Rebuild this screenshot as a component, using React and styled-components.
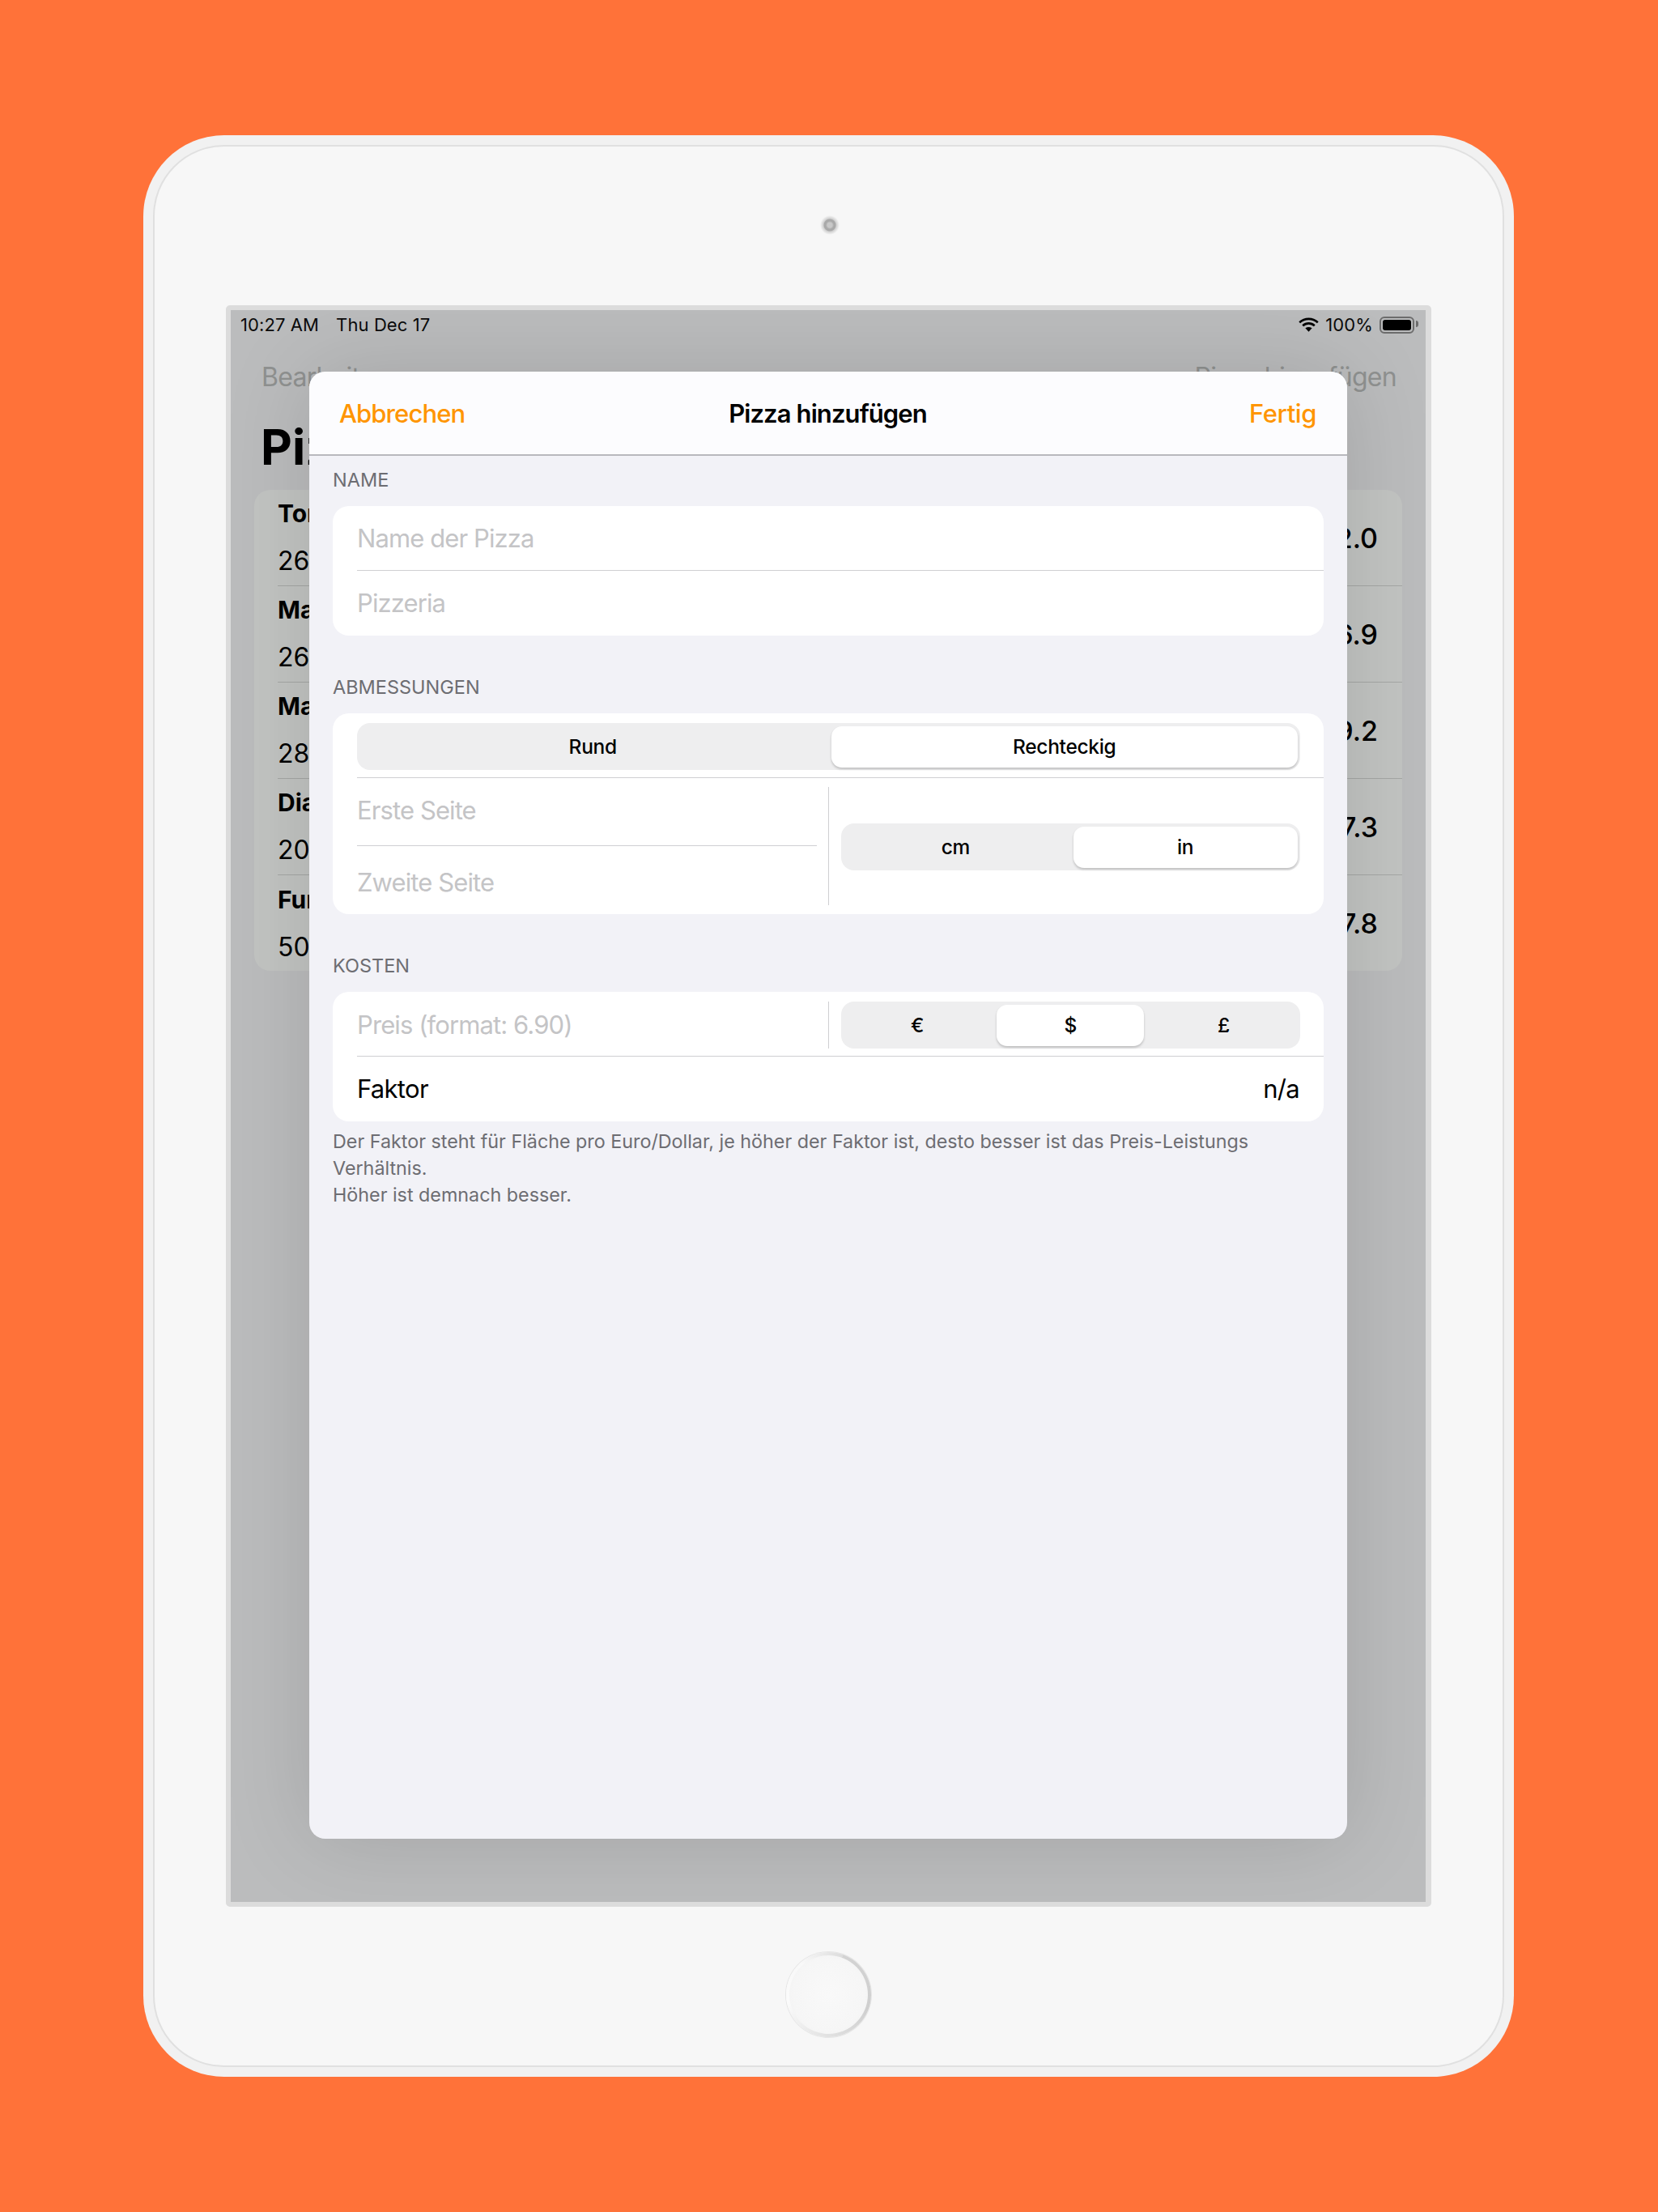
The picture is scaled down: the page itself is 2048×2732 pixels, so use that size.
import React from "react";
import styled, { createGlobalStyle } from "styled-components";

const Global = createGlobalStyle`
  html, body { margin: 0; padding: 0; background: #ff7239; }
  body { font-family: Inter, "Liberation Sans", sans-serif; -webkit-font-smoothing: antialiased; }
  * { box-sizing: border-box; }
`;

const Page = styled.div`
  width: 2048px;
  height: 2732px;
  padding: 167px 178px 167px 177px;
  background: #ff7239;
`;
const Device = styled.div`
  height: 2398px;
  padding: 12px;
  border-radius: 100px;
  background: #f1f1f1;
`;
const DeviceFace = styled.div`
  height: 100%;
  border: 2px solid #e0e0e0;
  border-radius: 88px;
  background: #f7f7f7;
  display: flex;
  flex-direction: column;
  align-items: center;
  padding-top: 85px;
`;
const Camera = styled.div`
  width: 24px;
  height: 24px;
  flex: none;
  margin-left: 3px;
  border-radius: 50%;
  background: radial-gradient(circle, #c8c8c8 0 3px, #a9a9a9 5px 7px, #cfcfcf 8px, #eeeeee 11px, #f7f7f7 12px);
`;
const ScreenFrame = styled.div`
  width: 1489px;
  height: 1978px;
  flex: none;
  margin-top: 87px;
  border: solid #dcdcdc;
  border-width: 6px 7px 6px 6px;
  border-radius: 5px;
  background: #dcdcdc;
`;
const Screen = styled.div`
  position: relative;
  height: 100%;
  overflow: hidden;
  background: #bbbcbd;
`;
const HomeButton = styled.div`
  width: 105px;
  height: 105px;
  flex: none;
  margin-top: 56px;
  padding: 4px;
  border-radius: 50%;
  background: conic-gradient(from 20deg, #d3d3d3 0deg, #cfcfcf 90deg, #e4e4e4 170deg, #fbfbfb 240deg, #f8f8f8 300deg, #dcdcdc 360deg);
  box-shadow: 0 0 0 1px #e6e6e6;
`;
const HomeInner = styled.div`
  width: 100%;
  height: 100%;
  border-radius: 50%;
  background: radial-gradient(circle, #f9f9f9 0, #f6f6f6 65%, #eeeeee 100%);
`;

const StatusBar = styled.div`
  height: 36px;
  padding: 0 9px 0 12px;
  display: flex;
  align-items: center;
  justify-content: space-between;
  font-size: 22px;
  letter-spacing: 0.1px;
  color: #0b0b0b;
`;
const StatusGroup = styled.div`
  display: flex;
  align-items: center;
  gap: ${p => p.$gap}px;
`;
const Battery = styled.div`
  width: 43px;
  height: 21px;
  padding: 2px;
  border: 2px solid #6c6c6c;
  border-radius: 6px;
  position: relative;
  margin-right: 5px;
  &::before {
    content: "";
    display: block;
    height: 100%;
    border-radius: 3px;
    background: #000;
  }
  &::after {
    content: "";
    position: absolute;
    right: -7px;
    top: 3px;
    width: 3px;
    height: 8px;
    border-radius: 0 3px 3px 0;
    background: #6c6c6c;
  }
`;
const NavBar = styled.div`
  height: 58px;
  margin-top: 17px;
  padding: 0 36px 0 38px;
  display: flex;
  align-items: center;
  justify-content: space-between;
  font-size: 32px;
  letter-spacing: -0.7px;
  color: #8f9190;
`;
const LargeTitle = styled.div`
  height: 111px;
  padding: 16px 0 0 37px;
  font-size: 60px;
  line-height: 84px;
  font-weight: 700;
  color: #000;
`;
const BackList = styled.div`
  margin: 0 29px;
  height: 594px;
  border-radius: 20px;
  background: #c2c4c2;
  overflow: hidden;
`;
const BackRow = styled.div`
  height: 119px;
  margin-left: 29px;
  padding-right: 30px;
  display: flex;
  align-items: center;
  justify-content: space-between;
  border-bottom: ${p => (p.$last ? "none" : "1.5px solid #a5a7a5")};
  color: #000;
`;
const BackName = styled.div`
  font-size: 30px;
  line-height: 34px;
  font-weight: 700;
`;
const BackSize = styled.div`
  margin-top: 24px;
  font-size: 32px;
  line-height: 36px;
`;
const BackValue = styled.div`
  font-size: 34px;
  font-weight: 500;
`;

const Modal = styled.div`
  position: absolute;
  left: 97px;
  top: 76px;
  width: 1282px;
  height: 1812px;
  border-radius: 20px;
  background: #f2f2f7;
  overflow: hidden;
`;
const ModalShadow = styled.div`
  position: absolute;
  left: 97px;
  top: 76px;
  width: 1282px;
  height: 1812px;
  border-radius: 20px;
  box-shadow: 0 0 110px rgba(0, 0, 0, 0.13);
`;
const ModalHeader = styled.div`
  height: 104px;
  padding: 0 38px 0 37px;
  display: flex;
  align-items: center;
  justify-content: space-between;
  background: #fcfcfe;
  border-bottom: 2px solid #b9b9bd;
  font-size: 31px;
  letter-spacing: -0.9px;
`;
const HeaderAction = styled.div`
  width: 240px;
  color: #ff9500;
  font-weight: 450;
  text-align: ${p => p.$align || "left"};
  letter-spacing: ${p => (p.$align ? "-0.4px" : "-0.9px")};
`;
const HeaderTitle = styled.div`
  color: #000;
  font-weight: 600;
`;
const Body = styled.div`
  padding: 0 29px;
`;
const SectionLabel = styled.div`
  height: 62px;
  padding: 14px 0 16px 0;
  margin-top: ${p => (p.$first ? 0 : 34)}px;
  font-size: 23.5px;
  line-height: 32px;
  color: #6d6d72;
`;
const Card = styled.div`
  border-radius: 20px;
  background: #fff;
  overflow: hidden;
`;
const Row = styled.div`
  margin-left: 30px;
  padding: ${p => p.$padding || "0 29px 0 0"};
  height: ${p => p.$height}px;
  border-bottom: ${p => (p.$last ? "none" : "1.5px solid #cfcfd2")};
`;
const TextRow = styled(Row)`
  display: flex;
  align-items: center;
  justify-content: space-between;
`;
const Placeholder = styled.div`
  font-size: 31px;
  line-height: 40px;
  letter-spacing: -0.9px;
  color: #c4c4c6;
`;
const SplitRow = styled(Row)`
  display: grid;
  grid-template-columns: 1fr 30px 1fr;
`;
const FieldStack = styled.div`
  display: flex;
  flex-direction: column;
`;
const Field = styled.div`
  flex: 1;
  display: flex;
  align-items: center;
  padding: ${p => p.$padding};
  border-bottom: ${p => (p.$divided ? "1.5px solid #cfcfd2" : "none")};
`;
const VDivider = styled.div`
  width: 1.5px;
  margin: ${p => p.$margin || "0"} auto;
  background: #cfcfd2;
`;
const Centered = styled.div`
  display: flex;
  align-items: center;
  padding-top: ${p => p.$nudge || 0}px;
`;
const Segmented = styled.div`
  display: grid;
  grid-template-columns: repeat(${p => p.$count}, 1fr);
  width: 100%;
  height: 58px;
  border-radius: 16px;
  background: #eeeeef;
`;
const Segment = styled.div`
  margin: 3.5px;
  border-radius: 13px;
  display: flex;
  align-items: center;
  justify-content: center;
  font-size: 24.5px;
  letter-spacing: -0.3px;
  font-weight: 500;
  color: #000;
  background: ${p => (p.$active ? "#fff" : "transparent")};
  box-shadow: ${p => (p.$active ? "0 2px 3px rgba(0,0,0,0.2)" : "none")};
`;
const Plain = styled.div`
  font-size: 31px;
  line-height: 40px;
  letter-spacing: -0.7px;
  color: #000;
`;
const Footer = styled.div`
  margin-top: 8px;
  font-size: 23.3px;
  line-height: 33px;
  color: #6d6d72;
`;

const Wifi = () => (
  <svg width="25" height="18" viewBox="0 0 25 18" fill="none">
    <path d="M1.2 6.2C7.5 0.4 17.5 0.4 23.8 6.2" stroke="#000" strokeWidth="2.6" />
    <path d="M5.2 10.2C9.4 6.4 15.6 6.4 19.8 10.2" stroke="#000" strokeWidth="2.6" />
    <path d="M8.4 13.3C11 11.5 14 11.5 16.6 13.3L12.5 17.8Z" fill="#000" />
  </svg>
);

const rows = [
  ["Tonno", "26 cm", "12.0"],
  ["Margherita", "26 cm", "16.9"],
  ["Marinara", "28 cm", "19.2"],
  ["Diavola", "20 cm", "17.3"],
  ["Funghi", "50 cm", "17.8"],
];

export default function App() {
  return (
    <Page>
      <Global />
      <Device>
        <DeviceFace>
          <Camera />
          <ScreenFrame>
            <Screen>
              <StatusBar>
                <StatusGroup $gap={21}>
                  <span>10:27 AM</span>
                  <span>Thu Dec 17</span>
                </StatusGroup>
                <StatusGroup $gap={8}>
                  <Wifi />
                  <span>100%</span>
                  <Battery />
                </StatusGroup>
              </StatusBar>
              <NavBar>
                <span>Bearbeiten</span>
                <span>Pizza hinzufügen</span>
              </NavBar>
              <LargeTitle>Pizzen</LargeTitle>
              <BackList>
                {rows.map((r, i) => (
                  <BackRow key={r[0]} $last={i === rows.length - 1}>
                    <div>
                      <BackName>{r[0]}</BackName>
                      <BackSize>{r[1]}</BackSize>
                    </div>
                    <BackValue>{r[2]}</BackValue>
                  </BackRow>
                ))}
              </BackList>
              <ModalShadow />
              <Modal>
                <ModalHeader>
                  <HeaderAction>Abbrechen</HeaderAction>
                  <HeaderTitle>Pizza hinzufügen</HeaderTitle>
                  <HeaderAction $align="right">Fertig</HeaderAction>
                </ModalHeader>
                <Body>
                  <SectionLabel $first>NAME</SectionLabel>
                  <Card>
                    <TextRow $height={80}>
                      <Placeholder>Name der Pizza</Placeholder>
                    </TextRow>
                    <TextRow $height={80} $last>
                      <Placeholder>Pizzeria</Placeholder>
                    </TextRow>
                  </Card>

                  <SectionLabel>ABMESSUNGEN</SectionLabel>
                  <Card>
                    <Row $height={80} $padding="12px 29px 0 0">
                      <Segmented $count={2}>
                        <Segment>Rund</Segment>
                        <Segment $active>Rechteckig</Segment>
                      </Segmented>
                    </Row>
                    <SplitRow $height={168} $last>
                      <FieldStack>
                        <Field $divided $padding="0 0 4px 0">
                          <Placeholder>Erste Seite</Placeholder>
                        </Field>
                        <Field $padding="5px 0 0 0">
                          <Placeholder>Zweite Seite</Placeholder>
                        </Field>
                      </FieldStack>
                      <VDivider $margin="11px" />
                      <Centered $nudge={2}>
                        <Segmented $count={2}>
                          <Segment>cm</Segment>
                          <Segment $active>in</Segment>
                        </Segmented>
                      </Centered>
                    </SplitRow>
                  </Card>

                  <SectionLabel>KOSTEN</SectionLabel>
                  <Card>
                    <SplitRow $height={80} $padding="12px 29px 10px 0">
                      <Centered>
                        <Placeholder>Preis (format: 6.90)</Placeholder>
                      </Centered>
                      <VDivider />
                      <Segmented $count={3}>
                        <Segment>€</Segment>
                        <Segment $active>$</Segment>
                        <Segment>£</Segment>
                      </Segmented>
                    </SplitRow>
                    <TextRow $height={80} $last $padding="0 30px 0 0">
                      <Plain>Faktor</Plain>
                      <Plain>n/a</Plain>
                    </TextRow>
                  </Card>
                  <Footer>
                    Der Faktor steht für Fläche pro Euro/Dollar, je höher der Faktor ist, desto besser ist das Preis-Leistungs
                    <br />
                    Verhältnis.
                    <br />
                    Höher ist demnach besser.
                  </Footer>
                </Body>
              </Modal>
            </Screen>
          </ScreenFrame>
          <HomeButton>
            <HomeInner />
          </HomeButton>
        </DeviceFace>
      </Device>
    </Page>
  );
}
